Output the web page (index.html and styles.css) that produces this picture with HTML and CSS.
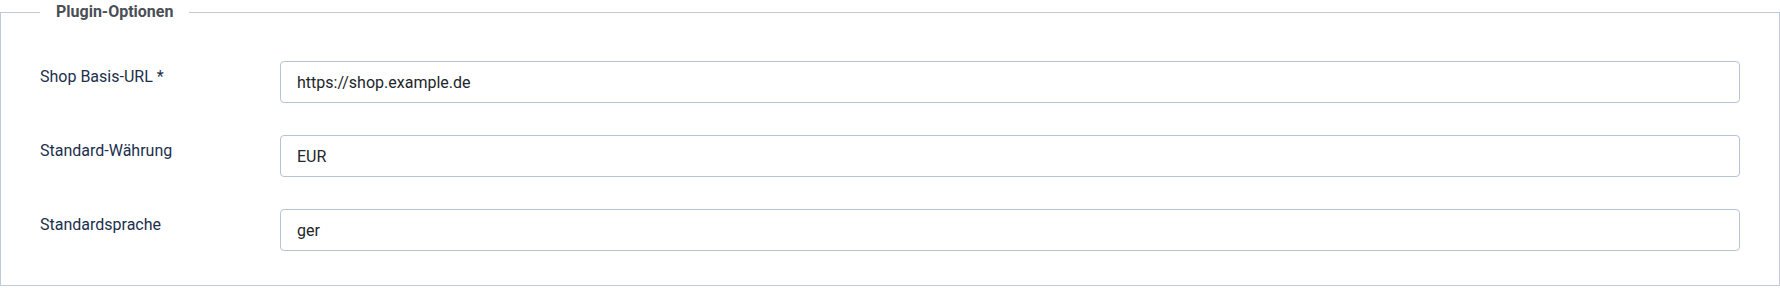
FILE: index.html
```html
<!DOCTYPE html>
<html lang="de">
<head>
<meta charset="utf-8">
<title>Plugin-Optionen</title>
<link rel="stylesheet" href="styles.css">
</head>
<body>
<fieldset class="options">
  <legend class="options-legend">Plugin-Optionen</legend>
  <div class="row">
    <label class="row-label" for="url">Shop Basis-URL *</label>
    <input class="row-input" id="url" type="text" value="https://shop.example.de">
  </div>
  <div class="row">
    <label class="row-label" for="cur">Standard-Währung</label>
    <input class="row-input" id="cur" type="text" value="EUR">
  </div>
  <div class="row">
    <label class="row-label" for="lang">Standardsprache</label>
    <input class="row-input" id="lang" type="text" value="ger">
  </div>
</fieldset>
</body>
</html>
```

FILE: styles.css
```css
html, body {
  margin: 0;
  padding: 0;
  background: #ffffff;
}
body {
  font-family: Roboto, "Liberation Sans", sans-serif;
  font-size: 16px;
  line-height: 24px;
  width: 1780px;
}
.options {
  margin: 0;
  border: 1px solid #bfcbdc;
  padding: 13px 39px 34px 39px;
  min-width: 0;
}
.options-legend {
  padding: 0 16px;
  margin: 0;
  font-weight: 700;
  font-size: 16px;
  line-height: 24px;
  color: #4a4f56;
}
.row {
  display: flex;
  align-items: flex-start;
  margin-top: 32px;
}
.row:first-of-type {
  margin-top: 24px;
}
.row-label {
  width: 240px;
  flex: none;
  padding-top: 4px;
  color: #1b2f4d;
}
.row-input {
  flex: 1;
  height: 42px;
  box-sizing: border-box;
  border: 1px solid #b6c3d6;
  border-radius: 4px;
  padding: 0 16px;
  font-family: Roboto, "Liberation Sans", sans-serif;
  font-size: 16px;
  color: #22262a;
  background: #fff;
  margin: 0;
  outline: none;
}
```
